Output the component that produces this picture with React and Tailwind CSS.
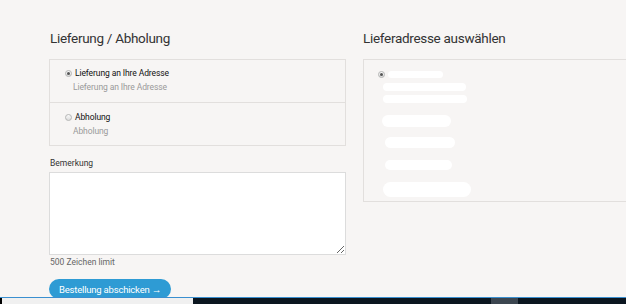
import React from "react";

function Radio({ checked }) {
  return (
    <span className="flex h-[7px] w-[7px] shrink-0 items-center justify-center rounded-full border border-[#b5b5b5] bg-gradient-to-b from-[#fafafa] to-[#dcdcdc]">
      {checked ? <span className="h-[3px] w-[3px] rounded-full bg-[#555]" /> : null}
    </span>
  );
}

function Blob({ w, h, mt, ml }) {
  return (
    <div
      className="rounded-full bg-white blur-[0.6px]"
      style={{ width: w, height: h, marginTop: mt, marginLeft: ml }}
    />
  );
}

export default function App() {
  return (
    <div
      className="relative flex h-[304px] w-[628px] overflow-hidden bg-white"
      style={{ fontFamily: "Roboto, 'Liberation Sans', sans-serif" }}
    >
      <div className="flex h-full w-[626px] gap-[17px] overflow-hidden bg-[#f7f5f4] pl-[49px] pt-[28px]">
        {/* Left column */}
        <div className="flex w-[297px] shrink-0 flex-col">
          <h2 className="mb-[11px] h-[20px] pl-[1px] text-[13.5px] leading-[20px] tracking-[-0.3px] text-[#333]">
            Lieferung / Abholung
          </h2>
          <div className="border border-[#e2dfdd]">
            <div className="border-b border-[#e2dfdd] pb-[8px] pl-[15px] pt-[6px]">
              <div className="flex h-[14px] items-center gap-[3px]">
                <Radio checked />
                <span className="text-[8.5px] tracking-[-0.1px] text-[#111]">Lieferung an Ihre Adresse</span>
              </div>
              <div className="ml-[8px] h-[14px] text-[8.5px] leading-[14px] tracking-[-0.1px] text-[#9a9a9a]">
                Lieferung an Ihre Adresse
              </div>
            </div>
            <div className="pb-[7px] pl-[15px] pt-[7px]">
              <div className="flex h-[14px] items-center gap-[3px]">
                <Radio />
                <span className="text-[8.5px] tracking-[-0.1px] text-[#111]">Abholung</span>
              </div>
              <div className="ml-[8px] h-[14px] text-[8.5px] leading-[14px] tracking-[-0.1px] text-[#9a9a9a]">
                Abholung
              </div>
            </div>
          </div>
          <div className="mt-[10px] h-[14px] pl-[1px] text-[8.5px] leading-[14px] text-[#333]">Bemerkung</div>
          <textarea className="mt-[2px] h-[83px] w-[297px] border border-[#dcdcdc] bg-white outline-none" />
          <div className="h-[14px] pl-[1px] text-[8.5px] leading-[14px] text-[#666]">500 Zeichen limit</div>
          <button className="mt-[10px] flex h-[20px] w-[122px] items-center justify-center rounded-full bg-[#2e9bd4] pt-[2px] text-[9.5px] tracking-[-0.2px] text-white">
            Bestellung abschicken →
          </button>
        </div>

        {/* Right column */}
        <div className="flex w-[275px] shrink-0 flex-col">
          <h2 className="mb-[11px] h-[20px] text-[13.5px] leading-[20px] tracking-[-0.3px] text-[#333]">
            Lieferadresse auswählen
          </h2>
          <div className="flex h-[143px] flex-col border border-[#e2dfdd] pl-[14px] pt-[10px]">
            <div className="flex h-[8px] items-center gap-[3px]">
              <Radio checked />
              <Blob w={55} h={7} mt={0} ml={0} />
            </div>
            <Blob w={83} h={8} mt={5} ml={5} />
            <Blob w={84} h={8} mt={4} ml={5} />
            <Blob w={69} h={12} mt={12} ml={4} />
            <Blob w={70} h={11} mt={10} ml={7} />
            <Blob w={67} h={10} mt={12} ml={7} />
            <Blob w={88} h={15} mt={12} ml={5} />
          </div>
        </div>
      </div>
      <div className="h-full w-[2px] bg-white" />

      {/* Taskbar overlay */}
      <div className="absolute bottom-0 left-0 flex h-[7px] w-[626px] border-t border-[#3a8fd0] bg-[#0b1620]">
        <div className="h-full w-[2px] bg-black" />
        <div className="h-full w-[191px] bg-[#f0f0f0]" />
        <div className="ml-[298px] h-full w-[27px] bg-[#3c4650]" />
      </div>
    </div>
  );
}
